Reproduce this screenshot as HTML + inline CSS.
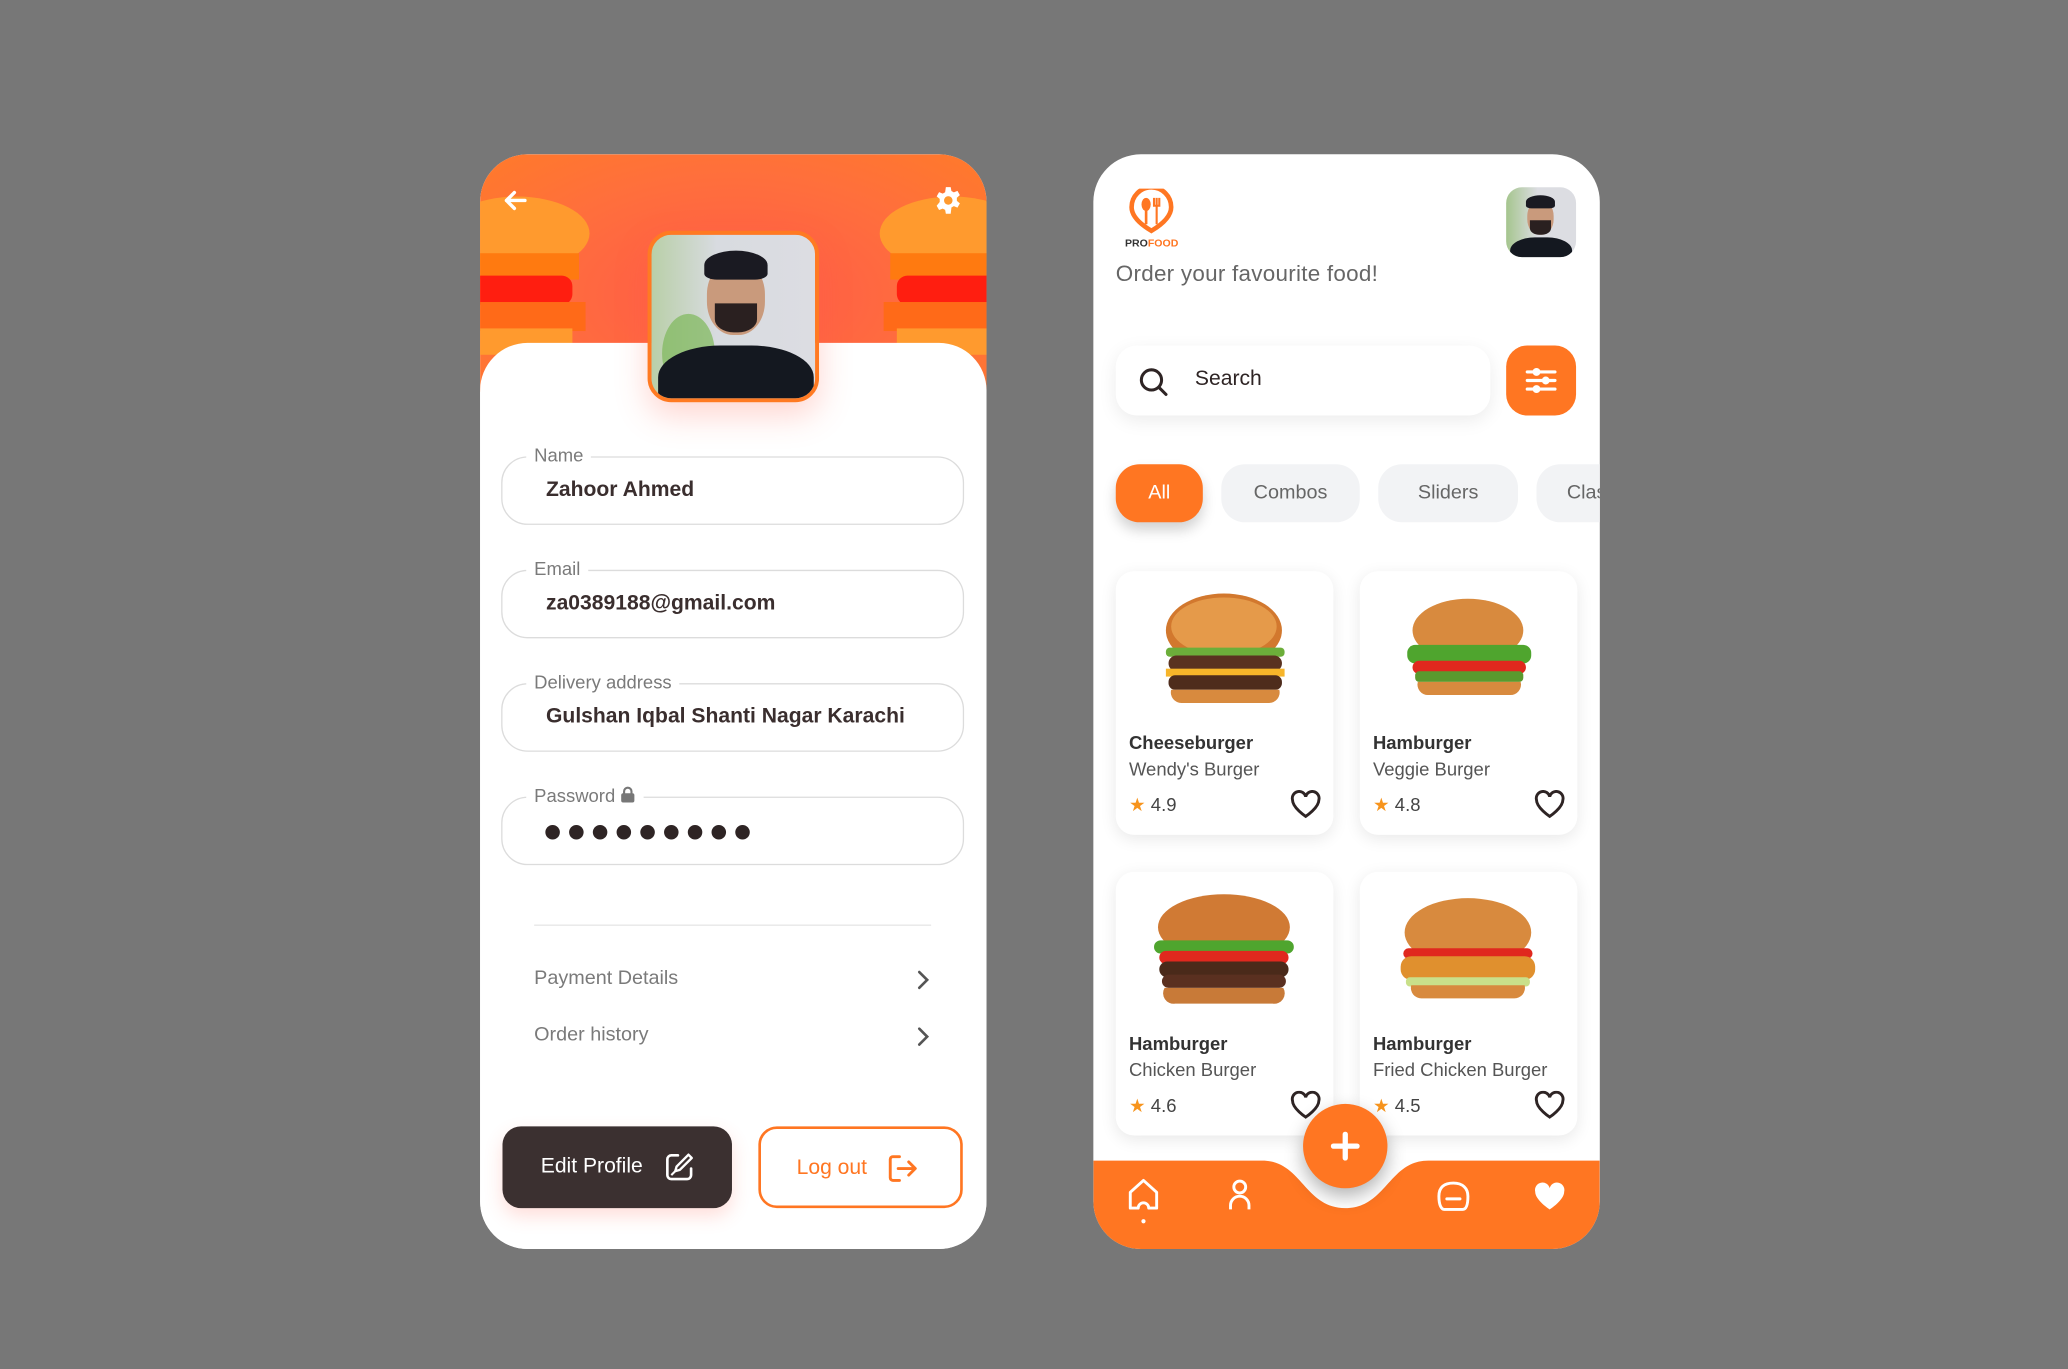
<!DOCTYPE html>
<html><head><meta charset="utf-8"><style>
*{margin:0;padding:0;box-sizing:border-box}
html,body{width:2068px;height:1369px;overflow:hidden;background:#777777}
#w{position:absolute;left:0;top:0;width:1568px;height:1038px;transform:scale(1.31888);transform-origin:0 0;font-family:"Liberation Sans",Arial,sans-serif}
.card{position:absolute;top:117px;width:384px;height:830px;border-radius:36px;overflow:hidden;background:#fff}
.abs{position:absolute}
.fld{position:absolute;left:16px;width:351px;height:52px;border:1.5px solid #dcdcdc;border-radius:20px}
.fld .lb{position:absolute;left:18px;top:-10px;background:#fff;padding:0 6px;font-size:14px;color:#7a7a7a}
.fld .v{position:absolute;left:33px;top:16px;font-size:16px;color:#3a2e2e;font-weight:bold;letter-spacing:0}
.menu{position:absolute;left:41px;font-size:15px;color:#7a7a7a}
.chip{position:absolute;top:235px;height:44px;border-radius:18px;background:#f2f3f5;color:#666;font-size:15px;text-align:center;line-height:44px}
.fc{position:absolute;width:165px;height:200px;border-radius:14px;background:#fff;box-shadow:0 3px 12px rgba(0,0,0,.09)}
.fc .t{position:absolute;left:10px;top:122px;font-size:14px;font-weight:bold;color:#333}
.fc .s{position:absolute;left:10px;top:142px;font-size:14px;color:#555}
.fc .r{position:absolute;left:10px;top:169px;font-size:14px;color:#444}
.fc .r b{color:#f7941d;font-weight:normal;margin-right:4px}
.fc svg.h{position:absolute;right:9px;top:166px}
.fc svg.bg{position:absolute;left:30px;top:10px}
</style></head><body><div id="w">

<!-- LEFT CARD -->
<div class="card" style="left:364px">
 <div class="abs" style="left:0;top:0;width:384px;height:180px;background:radial-gradient(ellipse at 50% 60%,#ff5a4a,#ff6f3c 60%,#ff7a2a)"></div>
 <!-- side burgers -->
 <svg class="abs" style="left:0;top:20px" width="90" height="140" viewBox="0 0 90 140">
  <ellipse cx="28" cy="40" rx="55" ry="28" fill="#ff9a2e"/>
  <rect x="-20" y="55" width="95" height="20" fill="#ff7a10"/>
  <rect x="-20" y="72" width="90" height="22" rx="8" fill="#ff1e10"/>
  <rect x="-20" y="92" width="100" height="22" fill="#ff6a18"/>
  <rect x="-20" y="112" width="90" height="20" fill="#ff9a2e"/>
 </svg>
 <svg class="abs" style="left:296px;top:20px" width="90" height="140" viewBox="0 0 90 140">
  <ellipse cx="62" cy="40" rx="55" ry="28" fill="#ff9a2e"/>
  <rect x="15" y="55" width="95" height="20" fill="#ff7a10"/>
  <rect x="20" y="72" width="90" height="22" rx="8" fill="#ff1e10"/>
  <rect x="10" y="92" width="100" height="22" fill="#ff6a18"/>
  <rect x="20" y="112" width="90" height="20" fill="#ff9a2e"/>
 </svg>
 <div class="abs" style="left:0;top:143px;width:384px;height:700px;background:#fff;border-radius:36px 36px 0 0"></div>
 <!-- back arrow -->
 <svg class="abs" style="left:17px;top:27px" width="20" height="16" viewBox="0 0 20 16"><path d="M17 8H3M9 2L3 8l6 6" stroke="#fff" stroke-width="2.6" fill="none" stroke-linecap="round" stroke-linejoin="round"/></svg>
 <!-- gear -->
 <svg class="abs" style="left:344px;top:24px" width="22" height="22" viewBox="0 0 24 24"><path fill="#fff" fill-rule="evenodd" d="M10 1h4l.6 3.2 2 1.1 3-1.2 2 3.5-2.5 2.1v2.6l2.5 2.1-2 3.5-3-1.2-2 1.1L14 23h-4l-.6-3.2-2-1.1-3 1.2-2-3.5L4.900 13.300V10.700L2.400 8.600l2-3.500 3 1.200 2-1.100zM12 8.500a3.500 3.500 0 1 0 .01 0z"/></svg>
 <!-- avatar -->
 <div class="abs" style="left:127px;top:58px;width:130px;height:130px;border-radius:18px;border:3px solid #ff7a22;overflow:hidden;background:linear-gradient(90deg,#b9cfa8,#d8dbe0 40%,#dcdde2);box-shadow:0 10px 24px rgba(255,90,70,.25)">
  <div class="abs" style="left:8px;top:60px;width:40px;height:60px;background:#7db85a;border-radius:50%;opacity:.7"></div>
  <div class="abs" style="left:42px;top:20px;width:44px;height:56px;border-radius:45%;background:#c99a7c"></div>
  <div class="abs" style="left:40px;top:12px;width:48px;height:22px;border-radius:50% 50% 20% 20%;background:#1a1a22"></div>
  <div class="abs" style="left:48px;top:52px;width:32px;height:22px;border-radius:0 0 45% 45%;background:#2a2020"></div>
  <div class="abs" style="left:5px;top:84px;width:118px;height:60px;border-radius:40% 40% 0 0;background:#141820"></div>
 </div>
 <div class="fld" style="top:229px"><span class="lb">Name</span><span class="v">Zahoor Ahmed</span></div>
 <div class="fld" style="top:315px"><span class="lb">Email</span><span class="v">za0389188@gmail.com</span></div>
 <div class="fld" style="top:401px"><span class="lb">Delivery address</span><span class="v">Gulshan Iqbal Shanti Nagar Karachi</span></div>
 <div class="fld" style="top:487px"><span class="lb">Password <svg width="12" height="13" viewBox="0 0 12 13" style="vertical-align:-1px"><rect x="1" y="5.5" width="10" height="7" rx="1.5" fill="#777"/><path d="M3.2 6V4a2.8 2.8 0 0 1 5.6 0v2" stroke="#777" stroke-width="1.6" fill="none"/></svg></span>
  <svg class="abs" style="left:32px;top:19px" width="160" height="14" viewBox="0 0 160 14"><g fill="#2e2424"><circle cx="6" cy="7" r="5.5"/><circle cx="24" cy="7" r="5.5"/><circle cx="42" cy="7" r="5.5"/><circle cx="60" cy="7" r="5.5"/><circle cx="78" cy="7" r="5.5"/><circle cx="96" cy="7" r="5.5"/><circle cx="114" cy="7" r="5.5"/><circle cx="132" cy="7" r="5.5"/><circle cx="150" cy="7" r="5.5"/></g></svg>
 </div>
 <div class="abs" style="left:41px;top:584px;width:301px;height:1px;background:#e6e6e6"></div>
 <div class="menu" style="top:616px">Payment Details</div>
 <div class="menu" style="top:659px">Order history</div>
 <svg class="abs" style="left:330px;top:618px" width="12" height="16" viewBox="0 0 12 16"><path d="M3 2l6 6-6 6" stroke="#555" stroke-width="2" fill="none" stroke-linecap="round"/></svg>
 <svg class="abs" style="left:330px;top:661px" width="12" height="16" viewBox="0 0 12 16"><path d="M3 2l6 6-6 6" stroke="#555" stroke-width="2" fill="none" stroke-linecap="round"/></svg>
 <div class="abs" style="left:17px;top:737px;width:174px;height:62px;border-radius:14px;background:#3b3030;box-shadow:0 6px 14px rgba(255,90,70,.2)">
  <span class="abs" style="left:29px;top:22px;color:#fff;font-size:16px">Edit Profile</span>
  <svg class="abs" style="left:122px;top:19px" width="24" height="24" viewBox="0 0 24 24"><path d="M11 3H6a3 3 0 0 0-3 3v12a3 3 0 0 0 3 3h12a3 3 0 0 0 3-3v-5" stroke="#fff" stroke-width="2" fill="none" stroke-linecap="round"/><path d="M19 2.5l2.5 2.5-9 9-3.5 1 1-3.5z" stroke="#fff" stroke-width="1.8" fill="none" stroke-linejoin="round"/><path d="M6 18l3-3" stroke="#fff" stroke-width="1.6"/></svg>
 </div>
 <div class="abs" style="left:211px;top:737px;width:155px;height:62px;border-radius:14px;border:2px solid #ff7622">
  <span class="abs" style="left:27px;top:21px;color:#ff7622;font-size:16px">Log out</span>
  <svg class="abs" style="left:95px;top:18px" width="24" height="24" viewBox="0 0 24 24"><path d="M10 3H5a2 2 0 0 0-2 2v14a2 2 0 0 0 2 2h5" stroke="#ff7622" stroke-width="2.2" fill="none" stroke-linecap="round"/><path d="M9 12h12M17 7l5 5-5 5" stroke="#ff7622" stroke-width="2.2" fill="none" stroke-linecap="round" stroke-linejoin="round"/></svg>
 </div>
</div>

<!-- RIGHT CARD -->
<div class="card" style="left:829px">
 <!-- logo -->
 <svg class="abs" style="left:24px;top:26px" width="44" height="50" viewBox="0 0 44 50">
  <path d="M20 32C10 26 5 20 5 14A15 15 0 0 1 35 14C35 20 30 26 20 32z" fill="none" stroke="#ff7622" stroke-width="3.5"/>
  <ellipse cx="16" cy="12" rx="3.5" ry="5" fill="#ff7622"/><rect x="15" y="15" width="2" height="12" fill="#ff7622"/>
  <path d="M22 7v6h4V7M24 7v20" stroke="#ff7622" stroke-width="1.6" fill="none"/>
  <text x="0" y="44" font-size="8" font-weight="bold" font-family="Liberation Sans" fill="#333">PRO<tspan fill="#ff7622">FOOD</tspan></text>
 </svg>
 <div class="abs" style="left:17px;top:81px;font-size:17px;color:#666;letter-spacing:.2px">Order your favourite food!</div>
 <div class="abs" style="left:313px;top:25px;width:53px;height:53px;border-radius:12px;overflow:hidden;background:linear-gradient(90deg,#a5c58e,#dcdde2 45%)">
  <div class="abs" style="left:16px;top:10px;width:20px;height:26px;border-radius:45%;background:#c99a7c"></div>
  <div class="abs" style="left:15px;top:6px;width:22px;height:10px;border-radius:50% 50% 20% 20%;background:#1a1a22"></div>
  <div class="abs" style="left:18px;top:25px;width:16px;height:11px;border-radius:0 0 45% 45%;background:#2a2020"></div>
  <div class="abs" style="left:3px;top:38px;width:47px;height:25px;border-radius:40% 40% 0 0;background:#141820"></div>
 </div>
 <div class="abs" style="left:17px;top:145px;width:284px;height:53px;border-radius:16px;background:#fff;box-shadow:0 4px 14px rgba(0,0,0,.08)">
  <svg class="abs" style="left:17px;top:16px" width="23" height="23" viewBox="0 0 24 24"><circle cx="10.5" cy="10.5" r="8" stroke="#2e2424" stroke-width="2.4" fill="none"/><path d="M16.5 16.5L22 22" stroke="#2e2424" stroke-width="2.4" stroke-linecap="round"/></svg>
  <span class="abs" style="left:60px;top:17px;font-size:16px;color:#2e2424">Search</span>
 </div>
 <div class="abs" style="left:313px;top:145px;width:53px;height:53px;border-radius:16px;background:#ff7622">
  <svg class="abs" style="left:14px;top:14px" width="25" height="25" viewBox="0 0 25 25"><g stroke="#fff" stroke-width="2.4" stroke-linecap="round"><path d="M2 6h21M2 12.5h21M2 19h21"/></g><g fill="#fff"><circle cx="9" cy="6" r="3"/><circle cx="16" cy="12.5" r="3"/><circle cx="9" cy="19" r="3"/></g></svg>
 </div>
 <div class="chip" style="left:17px;width:66px;background:#ff7622;color:#fff;box-shadow:0 6px 10px rgba(0,0,0,.18)">All</div>
 <div class="chip" style="left:97px;width:105px">Combos</div>
 <div class="chip" style="left:216px;width:106px">Sliders</div>
 <div class="chip" style="left:336px;width:100px;text-align:left;padding-left:23px">Classic</div>

 <div class="fc" style="left:17px;top:316px">
  <svg class="bg" width="105" height="100" viewBox="0 0 105 100"><ellipse cx="52" cy="35" rx="44" ry="28" fill="#d2782e"/><ellipse cx="52" cy="32" rx="40" ry="22" fill="#e59a4a"/><rect x="8" y="48" width="90" height="7" rx="3" fill="#6cae3a"/><rect x="10" y="54" width="86" height="12" rx="6" fill="#5a3220"/><rect x="8" y="64" width="90" height="6" fill="#f7b52a"/><rect x="10" y="69" width="86" height="11" rx="5" fill="#4e2c1c"/><path d="M12 80h82a8 8 0 0 1-8 10H20a8 8 0 0 1-8-10z" fill="#d88a3e"/></svg>
  <div class="t">Cheeseburger</div><div class="s">Wendy's Burger</div><div class="r"><b>★</b>4.9</div>
  <svg class="h" width="24" height="22" viewBox="0 0 24 22"><path d="M12 20S2 13.500 2 7.500A5 5 0 0 1 12 5a5 5 0 0 1 10 2.500C22 13.500 12 20 12 20z" stroke="#2e2424" stroke-width="2.2" fill="none"/></svg>
 </div>
 <div class="fc" style="left:202px;top:316px">
  <svg class="bg" width="105" height="100" viewBox="0 0 105 100"><ellipse cx="52" cy="35" rx="42" ry="24" fill="#d88a3e"/><rect x="6" y="46" width="94" height="14" rx="6" fill="#4fa52e"/><rect x="10" y="58" width="86" height="10" rx="5" fill="#e0281e"/><rect x="12" y="66" width="82" height="8" rx="3" fill="#5a9a2e"/><path d="M14 74h78a8 8 0 0 1-8 10H22a8 8 0 0 1-8-10z" fill="#d88a3e"/></svg>
  <div class="t">Hamburger</div><div class="s">Veggie Burger</div><div class="r"><b>★</b>4.8</div>
  <svg class="h" width="24" height="22" viewBox="0 0 24 22"><path d="M12 20S2 13.500 2 7.500A5 5 0 0 1 12 5a5 5 0 0 1 10 2.500C22 13.500 12 20 12 20z" stroke="#2e2424" stroke-width="2.2" fill="none"/></svg>
 </div>
 <div class="fc" style="left:17px;top:544px">
  <svg class="bg" width="115" height="100" viewBox="0 0 115 100" style="left:25px"><ellipse cx="57" cy="32" rx="50" ry="25" fill="#d07a34"/><rect x="4" y="42" width="106" height="10" rx="5" fill="#4fa52e"/><rect x="8" y="50" width="98" height="10" rx="5" fill="#e0281e"/><rect x="8" y="58" width="98" height="12" rx="6" fill="#4a2a1a"/><rect x="10" y="68" width="94" height="10" rx="5" fill="#5a3020"/><path d="M12 78h90a8 8 0 0 1-8 12H20a8 8 0 0 1-8-12z" fill="#c87a38"/></svg>
  <div class="t">Hamburger</div><div class="s">Chicken Burger</div><div class="r"><b>★</b>4.6</div>
  <svg class="h" width="24" height="22" viewBox="0 0 24 22"><path d="M12 20S2 13.500 2 7.500A5 5 0 0 1 12 5a5 5 0 0 1 10 2.500C22 13.500 12 20 12 20z" stroke="#2e2424" stroke-width="2.2" fill="none"/></svg>
 </div>
 <div class="fc" style="left:202px;top:544px">
  <svg class="bg" width="115" height="100" viewBox="0 0 115 100" style="left:25px"><ellipse cx="57" cy="36" rx="48" ry="26" fill="#d88a3e"/><rect x="8" y="48" width="98" height="8" rx="4" fill="#e0281e"/><rect x="6" y="54" width="102" height="18" rx="8" fill="#e0902e"/><rect x="10" y="70" width="94" height="7" rx="3" fill="#c9e08a"/><path d="M14 76h86a8 8 0 0 1-8 10H22a8 8 0 0 1-8-10z" fill="#d88a3e"/></svg>
  <div class="t">Hamburger</div><div class="s">Fried Chicken Burger</div><div class="r"><b>★</b>4.5</div>
  <svg class="h" width="24" height="22" viewBox="0 0 24 22"><path d="M12 20S2 13.500 2 7.500A5 5 0 0 1 12 5a5 5 0 0 1 10 2.500C22 13.500 12 20 12 20z" stroke="#2e2424" stroke-width="2.2" fill="none"/></svg>
 </div>

 <svg class="abs" style="left:0;top:0" width="384" height="830" viewBox="0 0 384 830"><path d="M0 763H128C158 763 160 799 191 799C222 799 224 763 254 763H384V830H0Z" fill="#ff7622"/></svg>
 <div class="abs" style="left:159px;top:720px;width:64px;height:64px;border-radius:50%;background:#ff7622;box-shadow:0 6px 14px rgba(0,0,0,.3)">
  <svg class="abs" style="left:21px;top:21px" width="22" height="22" viewBox="0 0 22 22"><path d="M11 2v18M2 11h18" stroke="#fff" stroke-width="4" stroke-linecap="round"/></svg>
 </div>
 <svg class="abs" style="left:26px;top:776px" width="24" height="36" viewBox="0 0 24 36"><path d="M2 23V11L12 2l10 9v12H16a4 4 0 0 0-8 0z" stroke="#fff" stroke-width="2.2" fill="none" stroke-linejoin="round"/><circle cx="12" cy="33" r="1.6" fill="#fff"/></svg>
 <svg class="abs" style="left:102px;top:777px" width="18" height="24" viewBox="0 0 18 24"><circle cx="9" cy="6" r="4.5" stroke="#fff" stroke-width="2.2" fill="none"/><path d="M2 23v-3a7 7 0 0 1 14 0v3" stroke="#fff" stroke-width="2.2" fill="none"/></svg>
 <svg class="abs" style="left:260px;top:778px" width="26" height="24" viewBox="0 0 26 24"><path d="M13 2C6 2 2 5 2 12s2 10 4 10h14c3 0 4-4 4-10S20 2 13 2z" stroke="#fff" stroke-width="2.2" fill="none"/><path d="M8 14h10" stroke="#fff" stroke-width="2.2" stroke-linecap="round"/></svg>
 <svg class="abs" style="left:334px;top:779px" width="24" height="22" viewBox="0 0 24 22"><path d="M12 21S1 14 1 7.500A5.500 5.500 0 0 1 12 5a5.500 5.500 0 0 1 11 2.500C23 14 12 21 12 21z" fill="#fff"/></svg>
</div>
</div></body></html>
